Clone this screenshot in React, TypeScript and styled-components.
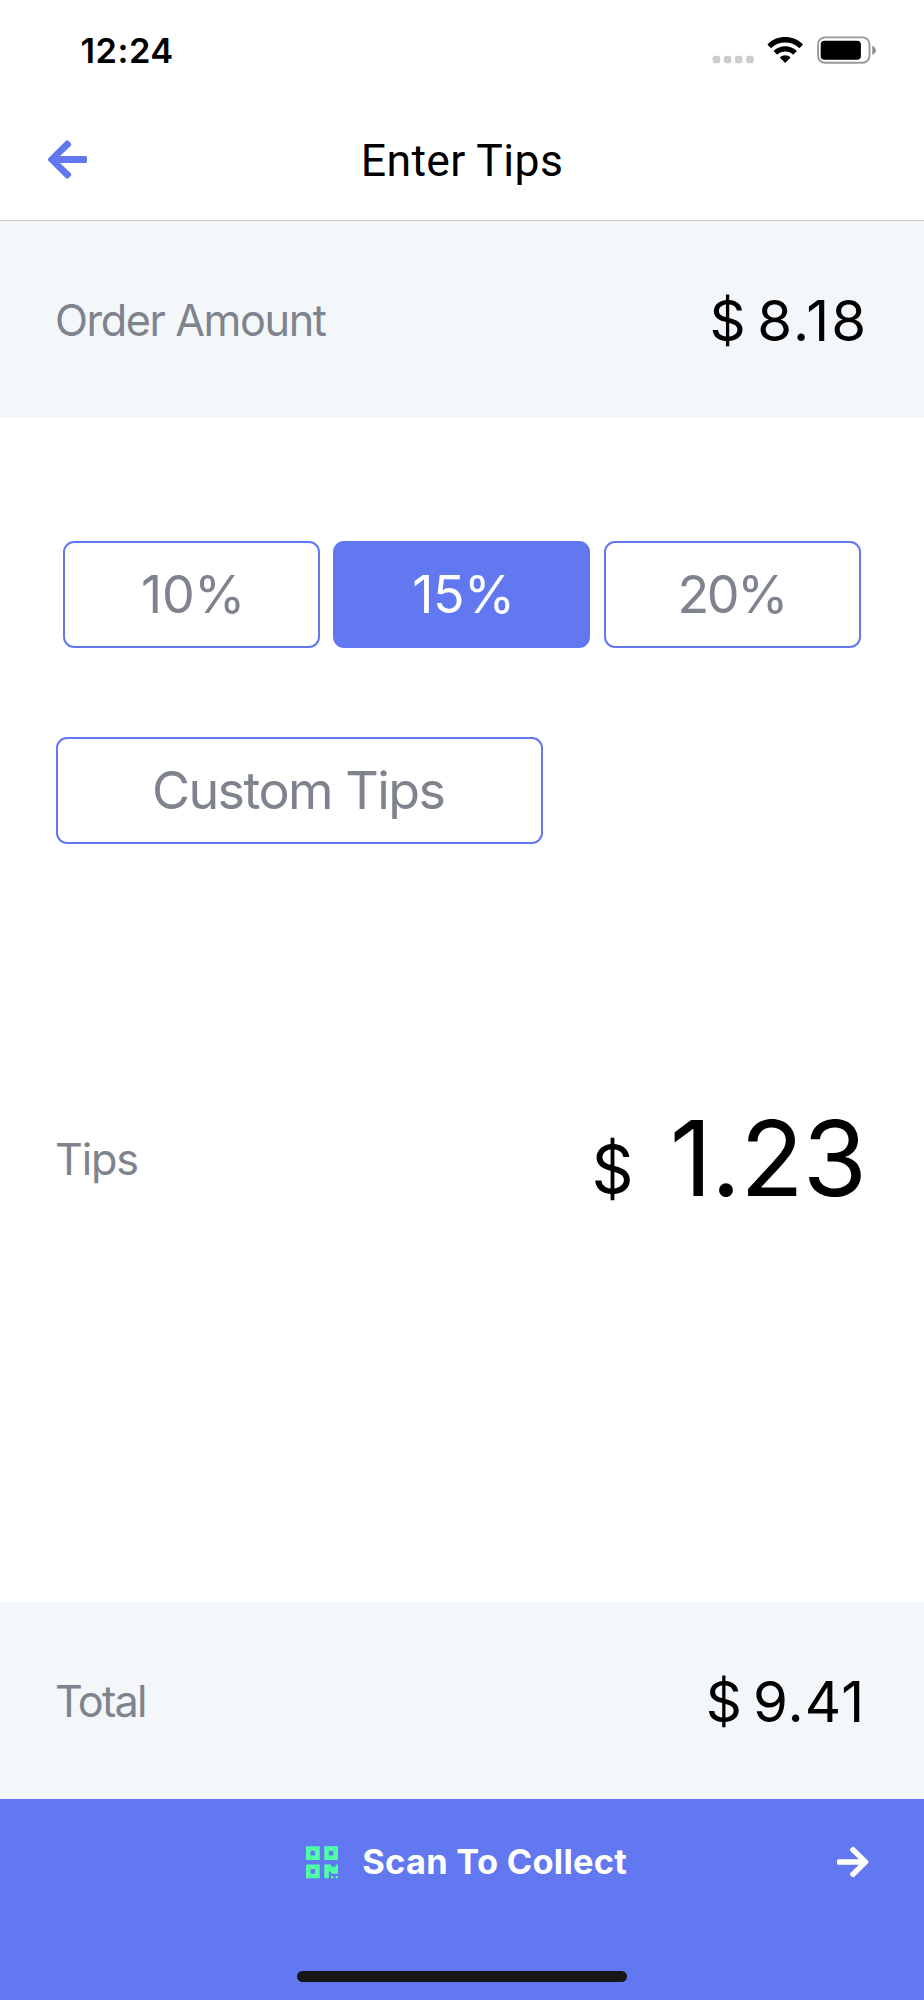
import React, { useState } from 'react';
import styled, { createGlobalStyle } from 'styled-components';
import { FaArrowLeft, FaArrowRight, FaQrcode } from 'react-icons/fa';

const BLUE = '#6178f1';
const GREY = '#7f838e';
const PANEL = '#f3f7fa';

const GlobalStyle = createGlobalStyle`
  * { box-sizing: border-box; }
  body {
    margin: 0;
    background: #fff;
    color: #000;
    font-family: Inter, "Liberation Sans", sans-serif;
  }
  button { font: inherit; color: inherit; background: none; border: 0; padding: 0; }
`;

const Screen = styled.div`
  display: flex;
  flex-direction: column;
  width: 924px;
  height: 2000px;
  overflow: hidden;
`;

const StatusBar = styled.div`
  display: flex;
  justify-content: space-between;
  align-items: center;
  height: 101px;
  padding: 0 48px 0 80.5px;
`;

const Clock = styled.span`
  font-size: 34.4px;
  font-weight: 600;
  letter-spacing: 0.49px;
`;

const StatusIcons = styled.svg`
  display: block;
  width: 164px;
  height: 28px;
  margin-top: -1px;
`;

const Header = styled.header`
  display: grid;
  grid-template-columns: 100px 1fr 100px;
  align-items: center;
  height: 120px;
  padding-bottom: 2px;
  border-bottom: 1px solid #c1c1c6;
`;

const BackButton = styled.button`
  display: flex;
  padding-left: 47.6px;
  color: ${BLUE};

  svg { width: 39.4px; height: 45px; }
`;

const Title = styled.h1`
  margin: 0;
  padding-top: 2px;
  font: 400 44.5px Roboto, sans-serif;
  letter-spacing: 0.39px;
  text-align: center;
`;

const AmountRow = styled.section<{ $height: number; $fill?: string }>`
  display: flex;
  justify-content: space-between;
  align-items: center;
  height: ${p => p.$height}px;
  padding-left: 55px;
  background: ${p => p.$fill ?? 'transparent'};
`;

const Label = styled.span<{ $tracking: number }>`
  color: ${GREY};
  font-size: 43.2px;
  letter-spacing: ${p => p.$tracking}px;
`;

const Money = styled.div<{ $gap: number; $right: number }>`
  display: flex;
  align-items: center;
  gap: ${p => p.$gap}px;
  padding-right: ${p => p.$right}px;
`;

const Figure = styled.span<{ $size: number; $tracking?: number; $drop?: number }>`
  font-size: ${p => p.$size}px;
  line-height: 1.2;
  letter-spacing: ${p => p.$tracking ?? 0}px;
  padding-top: ${p => p.$drop ?? 0}px;
`;

const Choices = styled.main`
  display: flex;
  flex-direction: column;
  align-items: flex-start;
  gap: 89px;
  height: 590px;
  padding: 123px 56px 0;
`;

const Presets = styled.div`
  display: flex;
  gap: 13.7px;
  padding-left: 6.6px;
`;

const TipButton = styled.button<{ $width: number; $tracking: number; $indent?: number; $active?: boolean }>`
  width: ${p => p.$width}px;
  height: 107px;
  border: 2px solid ${BLUE};
  border-radius: 11px;
  background: ${p => (p.$active ? BLUE : '#fff')};
  color: ${p => (p.$active ? '#fff' : GREY)};
  font-size: 52px;
  line-height: 1;
  letter-spacing: ${p => p.$tracking}px;
  text-indent: ${p => p.$indent ?? 0}px;
`;

const Spacer = styled.div`
  flex: 1;
`;

const Footer = styled.footer`
  display: flex;
  flex-direction: column;
  align-items: center;
  justify-content: space-between;
  height: 201px;
  padding-bottom: 18px;
  background: ${BLUE};
`;

const CollectButton = styled.button`
  display: flex;
  align-items: center;
  width: 100%;
  height: 125px;
  padding: 0 55.5px 0 306.4px;
  color: #fff;
`;

const QrIcon = styled(FaQrcode)`
  width: 32px;
  height: 36.5px;
  margin-top: 1px;
  color: #4effa5;
`;

const CollectText = styled.span`
  margin-left: 23.9px;
  font-size: 34.4px;
  font-weight: 700;
  letter-spacing: 0.29px;
`;

const NextIcon = styled(FaArrowRight)`
  width: 31.5px;
  height: 36px;
  margin-left: auto;
`;

const HomeIndicator = styled.div`
  width: 330px;
  height: 11px;
  border-radius: 6px;
  background: #161616;
`;

const presets = [
  { label: '10%', tracking: -0.33, indent: 4 },
  { label: '15%', tracking: -0.5, indent: 3.5 },
  { label: '20%', tracking: -2.4, indent: -1.5 },
];

export default function App() {
  const [selected, setSelected] = useState('15%');

  return (
    <Screen>
      <GlobalStyle />
      <StatusBar>
        <Clock>12:24</Clock>
        <StatusIcons viewBox="712 36 164 28">
          <g fill="#cccccc">
            <rect x="712.7" y="55.8" width="7.5" height="7.5" rx="2.4" />
            <rect x="723.8" y="55.8" width="7.5" height="7.5" rx="2.4" />
            <rect x="735" y="55.8" width="7.5" height="7.5" rx="2.4" />
            <rect x="746.2" y="55.8" width="7.5" height="7.5" rx="2.4" />
          </g>
          <path d="M785.2 37 C778.5 37 772.3 39.6 767.8 44.1 Q767.4 44.6 767.8 45.1 L770.5 47.8 Q771 48.2 771.5 47.8 C775.2 44.4 780 42.5 785.2 42.5 C790.4 42.5 795.2 44.4 798.9 47.8 Q799.4 48.2 799.9 47.8 L802.6 45.1 Q803 44.6 802.6 44.1 C798.1 39.6 791.9 37 785.2 37 Z" />
          <path d="M785.2 46.2 C780.9 46.2 776.9 47.9 774 50.6 Q773.5 51.1 774 51.6 L776.7 54.3 Q777.2 54.7 777.7 54.3 C779.7 52.6 782.3 51.6 785.2 51.6 C788.1 51.6 790.7 52.6 792.7 54.3 Q793.2 54.7 793.7 54.3 L796.4 51.6 Q796.9 51.1 796.4 50.6 C793.5 47.9 789.5 46.2 785.2 46.2 Z" />
          <path d="M785.2 55.2 C783.3 55.2 781.6 55.9 780.3 57 Q779.8 57.5 780.3 58 L784.7 62.5 Q785.2 63 785.7 62.5 L790.1 58 Q790.6 57.5 790.1 57 C788.8 55.9 787.1 55.2 785.2 55.2 Z" />
          <rect x="818" y="37.4" width="51.5" height="25.4" rx="7" fill="none" stroke="#9a9a9a" strokeWidth="1.9" />
          <rect x="820.7" y="40.8" width="40.2" height="19" rx="3.8" />
          <path d="M872.3 45.8 C874.6 46.8 875.8 48.4 875.8 50.3 C875.8 52.2 874.6 53.9 872.3 54.9 Z" fill="#8c8c8c" />
        </StatusIcons>
      </StatusBar>

      <Header>
        <BackButton aria-label="Back"><FaArrowLeft /></BackButton>
        <Title>Enter Tips</Title>
      </Header>

      <AmountRow $height={197} $fill={PANEL}>
        <Label $tracking={-1.4}>Order Amount</Label>
        <Money $gap={11.6} $right={55.9}>
          <Figure $size={56.4} $drop={2}>$</Figure>
          <Figure $size={56.4} $drop={2} $tracking={2}>8.18</Figure>
        </Money>
      </AmountRow>

      <Choices>
        <Presets>
          {presets.map(p => (
            <TipButton
              key={p.label}
              $width={257}
              $tracking={p.tracking}
              $indent={p.indent}
              $active={p.label === selected}
              onClick={() => setSelected(p.label)}
            >
              {p.label}
            </TipButton>
          ))}
        </Presets>
        <TipButton $width={487} $tracking={-1.55} $indent={-2.6}>Custom Tips</TipButton>
      </Choices>

      <AmountRow $height={301}>
        <Label $tracking={-1.16}>Tips</Label>
        <Money $gap={36.2} $right={58}>
          <Figure $size={65.5} $drop={24}>$</Figure>
          <Figure $size={104} $tracking={-0.9}>1.23</Figure>
        </Money>
      </AmountRow>

      <Spacer />

      <AmountRow $height={197} $fill={PANEL}>
        <Label $tracking={-1.75}>Total</Label>
        <Money $gap={11} $right={58.8}>
          <Figure $size={56.4} $drop={2}>$</Figure>
          <Figure $size={56.4} $drop={2} $tracking={1.06}>9.41</Figure>
        </Money>
      </AmountRow>

      <Footer>
        <CollectButton>
          <QrIcon />
          <CollectText>Scan To Collect</CollectText>
          <NextIcon />
        </CollectButton>
        <HomeIndicator />
      </Footer>
    </Screen>
  );
}
